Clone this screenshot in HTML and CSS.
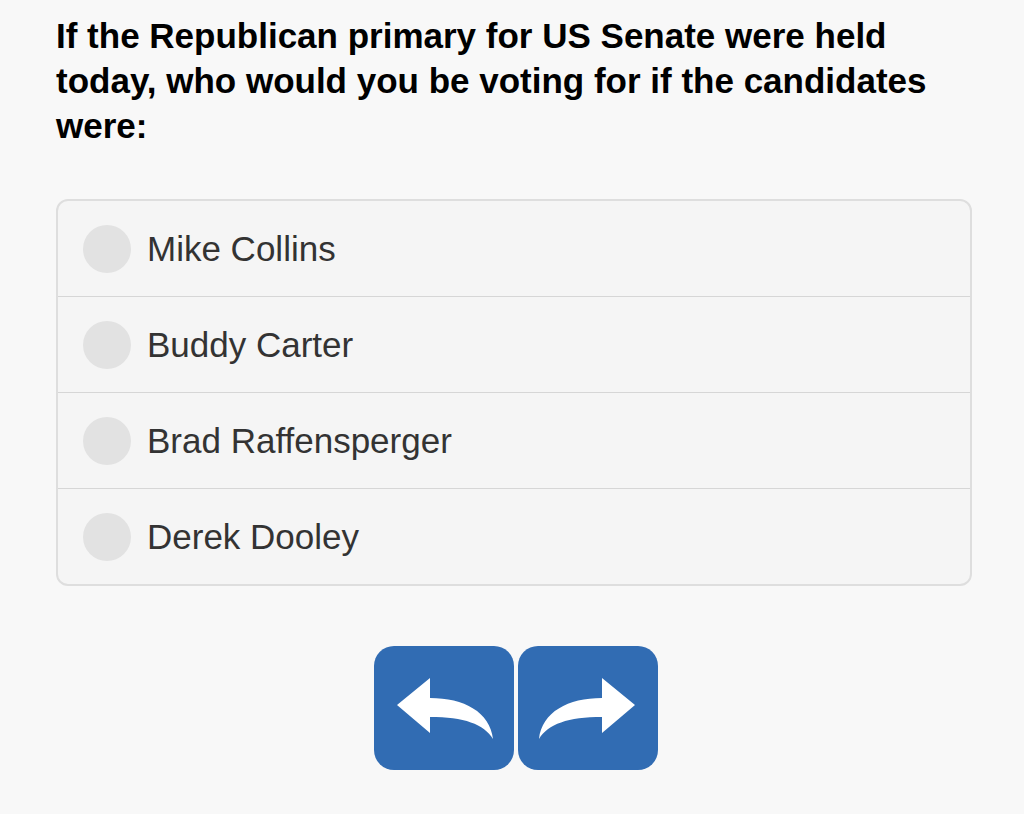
FILE: index.html
```html
<!DOCTYPE html>
<html lang="en">
<head>
<meta charset="utf-8">
<title>Survey</title>
<link rel="stylesheet" href="styles.css">
</head>
<body>
<main class="page">
  <h1 class="question">If the Republican primary for US Senate were held today, who would you be voting for if the candidates were:</h1>
  <ul class="options">
    <li class="option"><span class="radio"></span><span class="label">Mike Collins</span></li>
    <li class="option"><span class="radio"></span><span class="label">Buddy Carter</span></li>
    <li class="option"><span class="radio"></span><span class="label">Brad Raffensperger</span></li>
    <li class="option"><span class="radio"></span><span class="label">Derek Dooley</span></li>
  </ul>
  <div class="nav">
    <button class="nav-btn" aria-label="Back">
      <svg viewBox="0 0 140 124" width="140" height="124"><path d="M23 59 L56 32 L56 52 C90 52 116 66 119 93 C110 78 90 71 56 71 L56 87 Z" fill="#fff"/></svg>
    </button>
    <button class="nav-btn" aria-label="Next">
      <svg viewBox="0 0 140 124" width="140" height="124"><path d="M117 59 L84 32 L84 52 C50 52 24 66 21 93 C30 78 50 71 84 71 L84 87 Z" fill="#fff"/></svg>
    </button>
  </div>
</main>
</body>
</html>
```
FILE: styles.css
```css
html, body {
  margin: 0;
  padding: 0;
  background: #f8f8f8;
}
.page {
  width: 916px;
  margin: 0 0 0 56px;
  padding-top: 13px;
  font-family: "Liberation Sans", Arial, sans-serif;
}
.question {
  margin: 0;
  font-size: 35px;
  line-height: 45px;
  font-weight: bold;
  color: #000;
}
.options {
  list-style: none;
  margin: 51px 0 0 0;
  padding: 0;
  border: 2px solid #dedede;
  border-radius: 12px;
  background: #f5f5f5;
  overflow: hidden;
}
.option {
  display: flex;
  align-items: center;
  height: 95px;
  padding-left: 25px;
  gap: 16px;
}
.option + .option {
  border-top: 1px solid #d6d6d6;
}
.radio {
  width: 48px;
  height: 48px;
  border-radius: 50%;
  background: #e2e2e2;
  flex: none;
}
.label {
  font-size: 35px;
  color: #333;
}
.nav {
  display: flex;
  justify-content: center;
  gap: 4px;
  margin-top: 60px;
  padding-left: 4px;
}
.nav-btn {
  width: 140px;
  height: 124px;
  padding: 0;
  border: none;
  border-radius: 20px;
  background: #316cb3;
  display: flex;
  align-items: center;
  justify-content: center;
}
.nav-btn svg {
  display: block;
}
```
